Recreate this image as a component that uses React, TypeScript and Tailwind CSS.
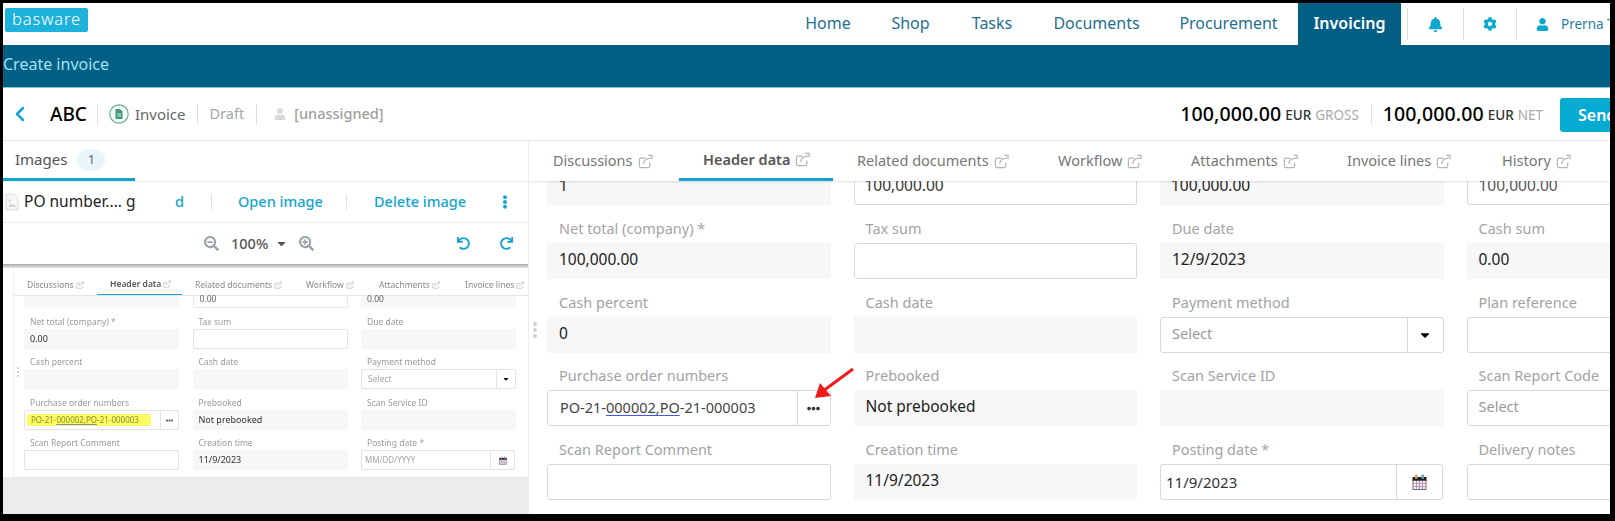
import React from "react";
import { ChevronLeft } from "lucide-react";
import { FaBell, FaCog, FaUser, FaCaretDown, FaEllipsisH, FaEllipsisV, FaSearchMinus, FaSearchPlus, FaUndo, FaRedo } from "react-icons/fa";

const Ext = ({ s = 16 }: { s?: number }) => (
  <svg width={s} height={s} viewBox="0 0 16 16" fill="none" stroke="#b4b4b4" strokeWidth="1.3" className="shrink-0">
    <path d="M12.5 9v4a1.500 1.500 0 0 1-1.500 1.500H3A1.500 1.500 0 0 1 1.500 13V6A1.500 1.500 0 0 1 3 4.500h5" />
    <path d="M6 10.500C6.500 7 9 4.500 14 4.500M11 1.500h4v4" />
  </svg>
);

const Cal = ({ w = 15, h = 16 }: { w?: number; h?: number }) => (
  <svg width={w} height={h} viewBox="0 0 15 16">
    <rect x="0.500" y="3" width="14" height="4" fill="#1c1c22" />
    <rect x="1" y="6.500" width="13" height="9" fill="#f3eef2" stroke="#4a4a58" strokeWidth="0.8" />
    <path d="M4.500 7v8.500M7.500 7v8.500M10.500 7v8.500" stroke="#8f8fc0" strokeWidth="0.9" />
    <path d="M1 9.500h13M1 12.500h13" stroke="#c98f9a" strokeWidth="0.9" />
    <rect x="3" y="0.500" width="2.500" height="4.500" rx="1" fill="#c9a25a" />
    <rect x="9.500" y="0.500" width="2.500" height="4.500" rx="1" fill="#6f9fc0" />
  </svg>
);

type F = { l?: string; v?: string; k: "ro" | "in" | "sel" | "more" | "cal" };

const rows: F[][] = [
  [{ l: "Net total (company) *", v: "100,000.00", k: "ro" }, { l: "Tax sum", k: "in" }, { l: "Due date", v: "12/9/2023", k: "ro" }, { l: "Cash sum", v: "0.00", k: "ro" }],
  [{ l: "Cash percent", v: "0", k: "ro" }, { l: "Cash date", k: "ro" }, { l: "Payment method", v: "Select", k: "sel" }, { l: "Plan reference", k: "in" }],
  [{ l: "Purchase order numbers", k: "more" }, { l: "Prebooked", v: "Not prebooked", k: "ro" }, { l: "Scan Service ID", k: "ro" }, { l: "Scan Report Code", v: "Select", k: "sel" }],
  [{ l: "Scan Report Comment", k: "in" }, { l: "Creation time", v: "11/9/2023", k: "ro" }, { l: "Posting date *", v: "11/9/2023", k: "cal" }, { l: "Delivery notes", k: "in" }],
];

const smallRows: F[][] = [
  [{ l: "Net total (company) *", v: "0.00", k: "ro" }, { l: "Tax sum", k: "in" }, { l: "Due date", k: "ro" }],
  [{ l: "Cash percent", k: "ro" }, { l: "Cash date", k: "ro" }, { l: "Payment method", v: "Select", k: "sel" }],
  [{ l: "Purchase order numbers", k: "more" }, { l: "Prebooked", v: "Not prebooked", k: "ro" }, { l: "Scan Service ID", k: "ro" }],
  [{ l: "Scan Report Comment", k: "in" }, { l: "Creation time", v: "11/9/2023", k: "ro" }, { l: "Posting date *", v: "MM/DD/YYYY", k: "cal" }],
];

function BigField({ f }: { f: F }) {
  return (
    <div className="flex flex-col justify-end min-w-0">
      <div className="h-[20px] leading-[20px] mb-[5px] pl-[12px] text-[14.5px] text-[#a3a3a3] whitespace-nowrap">{f.l}</div>
      {f.k === "ro" && <div className="h-[36px] bg-[#f7f7f7] pl-[12px] pb-[2px] flex items-center text-[15.5px] text-[#222]">{f.v}</div>}
      {f.k === "in" && <div className="h-[36px] bg-white border border-[#d9d9d9] rounded-[3px]" />}
      {f.k === "sel" && (
        <div className="h-[36px] border border-[#d9d9d9] rounded-[3px] flex items-center text-[14.5px] text-[#9a9a9a] pl-[11px]">
          <span className="flex-1 pb-[2px]">{f.v}</span>
          <span className="w-[36px] h-full border-l border-[#d9d9d9] flex items-center justify-center text-black"><FaCaretDown size={14} /></span>
        </div>
      )}
      {f.k === "more" && (
        <div className="h-[36px] border border-[#d9d9d9] rounded-[3px] flex items-center text-[14.5px] text-[#444] pl-[12px]">
          <span className="flex-1 whitespace-nowrap pb-[1px]">PO-21-<span className="underline decoration-[#3f5be0] underline-offset-2">000002,PO</span>-21-000003</span>
          <span className="w-[33px] h-full border-l border-[#d9d9d9] flex items-center justify-center text-[#333]"><FaEllipsisH size={13} /></span>
        </div>
      )}
      {f.k === "cal" && (
        <div className="h-[36px] border border-[#d9d9d9] rounded-[3px] flex items-center text-[15px] text-[#333] pl-[5px] mr-[1px]">
          <span className="flex-1">{f.v}</span>
          <span className="w-[46px] h-full border-l border-[#d9d9d9] flex items-center justify-center"><Cal /></span>
        </div>
      )}
    </div>
  );
}

function SmallField({ f }: { f: F }) {
  return (
    <div className="flex flex-col justify-end min-w-0">
      <div className="h-[12px] leading-[12px] mb-[1px] pl-[6px] text-[8.5px] text-[#9a9a9a] whitespace-nowrap">{f.l}</div>
      {f.k === "ro" && <div className="h-[20px] bg-[#f7f7f7] pl-[6px] flex items-center text-[9px] text-[#333]">{f.v}</div>}
      {f.k === "in" && <div className="h-[20px] bg-white border border-[#e2e2e2] rounded-[2px]" />}
      {f.k === "sel" && (
        <div className="h-[20px] border border-[#e2e2e2] rounded-[2px] flex items-center text-[8.5px] text-[#a5a5a5] pl-[6px]">
          <span className="flex-1">{f.v}</span>
          <span className="w-[19px] h-full border-l border-[#e2e2e2] flex items-center justify-center text-black"><FaCaretDown size={8} /></span>
        </div>
      )}
      {f.k === "more" && (
        <div className="relative h-[20px] border border-[#e2e2e2] rounded-[2px] flex items-center text-[8px] text-[#8f8f30] pl-[6px]">
          <span className="absolute left-[2px] top-[3px] w-[124px] h-[12px] bg-[#fbfb62] rounded-[2px]" />
          <span className="relative flex-1 whitespace-nowrap">PO-21-<span className="underline decoration-[#7f86d6]">000002,PO</span>-21-000003</span>
          <span className="relative w-[18px] h-full border-l border-[#e2e2e2] flex items-center justify-center text-[#555]"><FaEllipsisH size={7} /></span>
        </div>
      )}
      {f.k === "cal" && (
        <div className="h-[20px] border border-[#e2e2e2] rounded-[2px] flex items-center text-[8px] text-[#a5a5a5] pl-[3px] mr-[1px]">
          <span className="flex-1">{f.v}</span>
          <span className="w-[24px] h-full border-l border-[#e2e2e2] flex items-center justify-center"><Cal w={8} h={9} /></span>
        </div>
      )}
    </div>
  );
}

const nav = [
  ["Home", "w-[84px]"],
  ["Shop", "w-[81px]"],
  ["Tasks", "w-[82px]"],
  ["Documents", "w-[127px]"],
  ["Procurement", "w-[137px]"],
];

const tabs = [
  ["Discussions", "w-[150px]"],
  ["Header data", "w-[154px]"],
  ["Related documents", "w-[201px]"],
  ["Workflow", "w-[133px]"],
  ["Attachments", "w-[156px]"],
  ["Invoice lines", "w-[155px]"],
  ["History", "w-[132px]"],
];

const smallTabs = [
  ["Discussions", "w-[83px]"],
  ["Header data", "w-[85px]"],
  ["Related documents", "w-[111px]"],
  ["Workflow", "w-[73px]"],
  ["Attachments", "w-[86px]"],
  ["Invoice lines", "w-[64px]"],
];

export default function App() {
  return (
    <div className="w-[1615px] h-[521px] bg-black pt-[3px] pl-[3px] pr-[5px] pb-[7px] overflow-hidden" style={{ fontFamily: '"Noto Sans", sans-serif' }}>
      <div className="relative w-full h-full bg-white flex flex-col overflow-hidden">
        {/* top nav */}
        <div className="h-[42px] flex items-stretch shrink-0 overflow-hidden">
          <div className="w-[783px] shrink-0 pl-[2px] pt-[5px]">
            <div className="w-[83px] h-[24px] bg-[#1eb1da] rounded-[2px] flex items-center justify-center text-white text-[16.5px] font-light tracking-[0.9px] leading-none pb-[2px]">basware</div>
          </div>
          {nav.map(([t, w]) => (
            <div key={t} className={`${w} shrink-0 flex items-center justify-center text-[16px] text-[#1f6f90] pb-[2px]`}>{t}</div>
          ))}
          <div className="ml-[1px] w-[103px] shrink-0 bg-[#045f85] flex items-center justify-center text-white text-[16px] font-semibold pb-[2px]">Invoicing</div>
          <div className="ml-[6px] h-[32px] self-center w-px shrink-0 bg-[#dcdcdc]" />
          <div className="w-[55px] shrink-0 flex items-center justify-center text-[#0da8d0]"><FaBell size={15} /></div>
          <div className="h-[32px] self-center w-px shrink-0 bg-[#dcdcdc]" />
          <div className="w-[52px] shrink-0 flex items-center justify-center text-[#0da8d0]"><FaCog size={14} /></div>
          <div className="h-[32px] self-center w-px shrink-0 bg-[#dcdcdc]" />
          <div className="pl-[19px] shrink-0 flex items-center text-[#0da8d0]"><FaUser size={13} /></div>
          <div className="pl-[12px] shrink-0 flex items-center text-[13.5px] text-[#1f7fa6] whitespace-nowrap">Prerna T</div>
        </div>
        {/* band */}
        <div className="h-[43px] shrink-0 bg-[#045f85] border-b border-[#7cc7dc] flex items-center text-[16px] text-[#9fe3f3] pb-[4px]">Create invoice</div>
        {/* title row */}
        <div className="h-[53px] shrink-0 border-b border-[#e6e6e6] flex items-center">
          <ChevronLeft size={24} strokeWidth={2.5} className="ml-[5px] text-[#12a5cf]" />
          <span className="ml-[18px] text-[19px] font-medium text-black">ABC</span>
          <span className="ml-[10px] w-px h-[20px] bg-[#dedede]" />
          <svg width="20" height="20" viewBox="0 0 20 20" className="ml-[11px]">
            <circle cx="10" cy="10" r="9.200" fill="#f6fbf8" stroke="#6fae97" strokeWidth="1.200" />
            <path d="M6.500 5h4.500l2.500 2.500V15h-7z" fill="#3f9a78" />
            <path d="M8 10h4M8 12h4" stroke="#fff" strokeWidth=".8" />
          </svg>
          <span className="ml-[6px] text-[15px] text-[#666]">Invoice</span>
          <span className="ml-[11px] w-px h-[20px] bg-[#dedede]" />
          <span className="ml-[12px] text-[14.5px] text-[#a5a5a5]">Draft</span>
          <span className="ml-[12px] w-px h-[20px] bg-[#dedede]" />
          <FaUser size={12} className="ml-[17px] text-[#d8d8d8]" />
          <span className="ml-[8px] text-[14.5px] text-[#a0a0a0] font-medium">[unassigned]</span>
          <div className="flex-1" />
          <span className="text-[19.5px] font-medium text-black tracking-[0.1px]">100,000.00</span>
          <span className="ml-[4px] mt-[3px] text-[13.5px] text-[#333] font-medium">EUR</span>
          <span className="ml-[4px] mt-[3px] text-[13.5px] text-[#aaa]">GROSS</span>
          <span className="ml-[12px] w-px h-[20px] bg-[#dedede]" />
          <span className="ml-[11px] text-[19.5px] font-medium text-black tracking-[0.1px]">100,000.00</span>
          <span className="ml-[4px] mt-[3px] text-[13.5px] text-[#333] font-medium">EUR</span>
          <span className="ml-[4px] mt-[3px] text-[13.5px] text-[#aaa]">NET</span>
          <div className="ml-[17px] w-[50px] h-[34px] mt-[1px] bg-[#06abd2] rounded-l-[3px] pl-[18px] flex items-center text-white text-[16px] font-semibold overflow-hidden whitespace-nowrap">Send</div>
        </div>
        {/* main */}
        <div className="flex-1 flex min-h-0">
          {/* left */}
          <div className="w-[526px] shrink-0 border-r border-[#ececec] flex flex-col">
            <div className="h-[41px] shrink-0 border-b border-[#ececec] flex">
              <div className="w-[132px] h-[40px] border-b-[3px] border-[#12a5cf] flex items-center pl-[12px]">
                <span className="text-[15px] text-[#555]">Images</span>
                <span className="ml-[10px] w-[28px] h-[22px] rounded-full bg-[#e8f6fc] flex items-center justify-center text-[13px] text-[#666]">1</span>
              </div>
            </div>
            <div className="h-[41px] shrink-0 border-b border-[#ececec] flex items-center text-[14.5px]">
              <svg width="14" height="18" viewBox="0 0 14 18" className="ml-[2px]">
                <path d="M1 1h8l4 4v12H1z" fill="#f6f6f6" stroke="#dcdcdc" />
                <path d="M3 14l3-3.500 2 2 1.500-1.500L11 14z" fill="#d5d5d5" />
                <circle cx="5" cy="7.500" r="1.200" fill="#d5d5d5" />
              </svg>
              <span className="ml-[5px] w-[112px] text-[#222] text-[15.5px] whitespace-nowrap">PO number.... g</span>
              <span className="ml-[39px] w-[36px] text-[#12a5cf] font-medium">d</span>
              <span className="w-px h-[16px] bg-[#e0e0e0]" />
              <span className="ml-[26px] w-[108px] text-[#12a5cf] font-medium whitespace-nowrap">Open image</span>
              <span className="w-px h-[16px] bg-[#e0e0e0]" />
              <span className="ml-[27px] w-[124px] text-[#12a5cf] font-medium whitespace-nowrap">Delete image</span>
              <FaEllipsisV size={14} className="text-[#12a5cf]" />
            </div>
            <div className="h-[41px] shrink-0 flex items-center text-[#9aa5a8]">
              <FaSearchMinus size={15} className="ml-[201px]" />
              <span className="ml-[12px] text-[14.5px] text-[#555] font-medium">100%</span>
              <FaCaretDown size={13} className="ml-[7px] text-[#555]" />
              <FaSearchPlus size={15} className="ml-[11px]" />
              <FaUndo size={13} className="ml-[143px] text-[#12a5cf]" />
              <FaRedo size={13} className="ml-[30px] text-[#12a5cf]" />
            </div>
            <div className="h-[4px] shrink-0 bg-gradient-to-b from-[#a9a9a9] to-[#e8e8e8]" />
            {/* embedded image */}
            <div className="flex-1 flex flex-col bg-[#ececec] min-h-0">
              <div className="h-[209px] shrink-0 bg-white flex blur-[0.35px]">
                <div className="w-[11px] shrink-0 border-r border-[#f0f0f0]" />
                <div className="flex-1 flex flex-col min-w-0">
                  <div className="h-[28px] shrink-0 flex border-b border-[#e6e6e6] overflow-hidden">
                    {smallTabs.map(([t, w], i) => (
                      <div key={t} className={`${w} shrink-0 h-[28px] flex items-center gap-[2px] pl-[13px] pt-[6px] text-[8.5px] whitespace-nowrap ${i === 1 ? "border-b-2 border-[#12a5cf] text-[#555] font-semibold" : "text-[#888]"}`}>
                        {t} <Ext s={8} />
                      </div>
                    ))}
                  </div>
                  <div className="relative pl-[10px] grid grid-cols-[155px_155px_155px] gap-x-[13.5px] grid-rows-[12px_41px_40px_41px_40px]">
                    <div className="bg-[#f7f7f7]" />
                    <div className="bg-white border-x border-b border-[#e8e8e8] pl-[6px] text-[8.5px] leading-[6px] text-[#666]">0.00</div>
                    <div className="bg-[#f7f7f7] pl-[6px] text-[8.5px] leading-[6px] text-[#666]">0.00</div>
                    {smallRows.flat().map((f, i) => <SmallField key={i} f={f} />)}
                    <div className="absolute left-[3px] top-[71px] flex flex-col gap-[2px]">
                      <span className="w-[2px] h-[2px] rounded-full bg-[#c8c8c8]" />
                      <span className="w-[2px] h-[2px] rounded-full bg-[#c8c8c8]" />
                      <span className="w-[2px] h-[2px] rounded-full bg-[#c8c8c8]" />
                    </div>
                  </div>
                </div>
              </div>
            </div>
          </div>
          {/* right */}
          <div className="relative flex-1 min-w-0 flex flex-col overflow-hidden">
            <div className="relative z-10 h-[40px] shrink-0 bg-white shadow-[0_1px_2px_rgba(0,0,0,0.12)] flex overflow-hidden">
              {tabs.map(([t, w], i) => (
                <div key={t} className={`${w} shrink-0 pl-[24px] flex items-center gap-[5px] text-[14.5px] whitespace-nowrap ${i === 1 ? "border-b-[3px] border-[#12a5cf] text-[#555] font-semibold" : "text-[#777]"}`}>
                  {t} <Ext s={15} />
                </div>
              ))}
            </div>
            <div className="pl-[18px] grid grid-cols-[283.5px_283.5px_283.5px_283.5px] gap-x-[23px] grid-rows-[24px_74px_74px_73px_74px] w-[1220px]">
              <div className="bg-[#f7f7f7] pl-[12px] text-[15.5px] text-[#222] leading-[8px] overflow-hidden">1</div>
              <div className="bg-white border-x border-b border-[#d9d9d9] rounded-b-[3px] pl-[10px] text-[15.5px] text-[#333] leading-[8px] overflow-hidden">100,000.00</div>
              <div className="bg-[#f7f7f7] pl-[11px] text-[15.5px] text-[#222] leading-[8px] overflow-hidden">100,000.00</div>
              <div className="bg-white border-x border-b border-[#d9d9d9] rounded-b-[3px] pl-[11px] text-[15.5px] text-[#555] leading-[8px] overflow-hidden">100,000.00</div>
              {rows.flat().map((f, i) => <BigField key={i} f={f} />)}
            </div>
            <div className="absolute left-[4px] top-[181px] flex flex-col gap-[2px]">
              <span className="w-[4px] h-[4px] rounded-full bg-[#cfcfcf]" />
              <span className="w-[4px] h-[4px] rounded-full bg-[#cfcfcf]" />
              <span className="w-[4px] h-[4px] rounded-full bg-[#cfcfcf]" />
            </div>
            <svg className="absolute left-[282px] top-[226px] z-20" width="44" height="34" viewBox="0 0 44 34">
              <path d="M42 2L12 24" stroke="#ee1c1c" strokeWidth="3" />
              <path d="M4 31L9 16l11 13z" fill="#ee1c1c" />
            </svg>
          </div>
        </div>
      </div>
    </div>
  );
}
